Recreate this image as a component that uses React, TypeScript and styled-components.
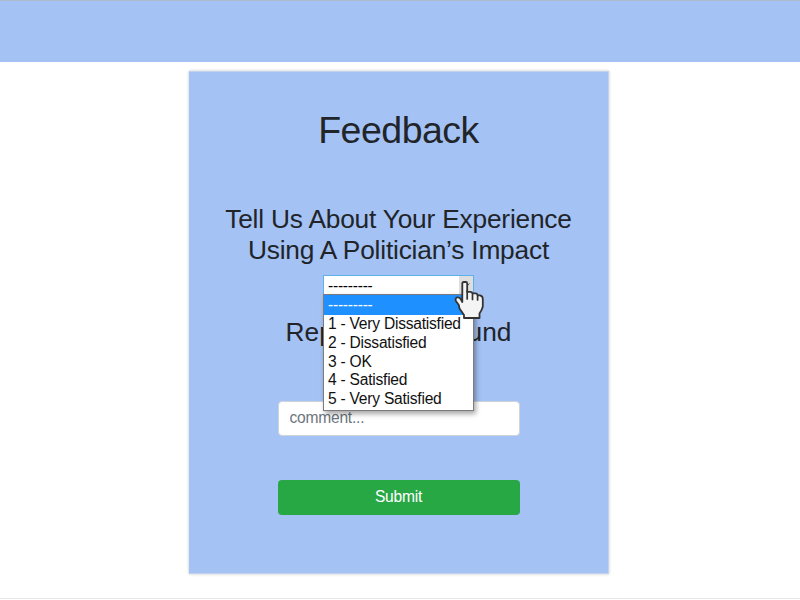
import React from "react";
import styled, { createGlobalStyle } from "styled-components";

const GlobalStyle = createGlobalStyle`
  *, *::before, *::after { box-sizing: border-box; }
  html, body { margin: 0; }
  body {
    height: 600px;
    overflow: hidden;
    background: #fff;
    color: #212529;
    font-family: "Liberation Sans", Arial, sans-serif;
    font-size: 15.6px;
    letter-spacing: -0.24px;
  }
`;

const Page = styled.div`
  display: flex;
  flex-direction: column;
  height: 600px;
`;

const TopBar = styled.header`
  flex: none;
  height: 62px;
  background: #a4c2f4;
  border-top: 1px solid #adbccc;
`;

const Main = styled.main`
  flex: 1;
  padding: 9px 0 0 189px;
`;

const Card = styled.section`
  display: flex;
  flex-direction: column;
  align-items: center;
  width: 420px;
  height: 503px;
  padding: 36px 1px 0 0;
  background: #a4c2f4;
  border: 1px solid #c3d2ee;
  border-left-color: #a4c2f4;
  box-shadow: 0 0 3px rgba(0, 0, 0, 0.22);
`;

const Title = styled.h1`
  margin: 0 0 51px;
  font-size: 37.5px;
  letter-spacing: -0.5px;
  font-weight: 400;
  line-height: 45px;
`;

const Heading = styled.h3<{ $spacing: number }>`
  margin: 0;
  font-size: 26.3px;
  letter-spacing: ${(p) => p.$spacing}px;
  font-weight: 400;
  line-height: 31px;
  text-align: center;
  white-space: nowrap;
`;

const Select = styled.div`
  position: relative;
  display: flex;
  justify-content: space-between;
  width: 151px;
  height: 20px;
  margin: 9px 0 22px;
  border: 1px solid #5eb0ea;
  background: #fff;
  color: #000;
  line-height: 19px;
`;

const SelectValue = styled.span`
  padding-left: 4px;
`;

const SelectArrow = styled.span`
  display: flex;
  align-items: center;
  justify-content: center;
  width: 14px;
  background: #dedede;
`;

const Menu = styled.ul`
  position: absolute;
  z-index: 1;
  top: 18px;
  left: -1px;
  width: 151px;
  height: 117px;
  margin: 0;
  padding: 0;
  list-style: none;
  background: #fff;
  border: 1px solid #7b7b80;
  box-shadow: 2px 3px 5px rgba(0, 0, 0, 0.35);
`;

const Option = styled.li<{ $selected?: boolean }>`
  height: ${(p) => (p.$selected ? 20 : 18.8)}px;
  padding-left: 4px;
  line-height: ${(p) => (p.$selected ? 20 : 17)}px;
  white-space: nowrap;
  color: ${(p) => (p.$selected ? "#fff" : "#111")};
  background: ${(p) => (p.$selected ? "#1e90ff" : "#fff")};
`;

const Pointer = styled.svg`
  position: absolute;
  z-index: 2;
  top: 3px;
  left: 130px;
  width: 32px;
  height: 41px;
`;

const Comment = styled.input`
  width: 242px;
  height: 35px;
  margin: 53px 0 44px;
  padding: 0 11px 2px;
  border: 1px solid #ced4da;
  border-radius: 4px;
  background: #fff;
  color: #495057;
  font: inherit;
  letter-spacing: inherit;
  &::placeholder { color: #6c757d; opacity: 1; }
`;

const Submit = styled.button`
  width: 242px;
  height: 35px;
  padding: 0 0 1px;
  border: 0;
  border-radius: 4px;
  background: #28a745;
  color: #fff;
  font: inherit;
  letter-spacing: inherit;
`;

const Footer = styled.footer`
  flex: none;
  height: 2px;
  border-top: 1px solid #e7e7e7;
`;

const options = [
  "---------",
  "1 - Very Dissatisfied",
  "2 - Dissatisfied",
  "3 - OK",
  "4 - Satisfied",
  "5 - Very Satisfied",
];

function HandPointer() {
  return (
    <Pointer viewBox="0 0 32 41" aria-hidden="true">
      <path
        d="M8.3 23V4.5Q8.3 3 9.8 3H11.7Q13.2 3 13.2 4.5V12.8H16.5Q18.2 12.8 18.5 14.4H21.6Q23.3 14.4 23.6 16.4H26Q28.8 17 28.8 20V27.5Q28 31 25.5 34.5V39H10V36L5.5 29.5L4.8 26L2.2 22.5Q0.8 20 2.5 18.6Q4.8 17.8 6.8 20.2Z"
        fill="#f4f4f4"
        stroke="#333"
        strokeWidth="1.8"
        strokeLinejoin="round"
      />
      <path
        d="M13.2 12V20M18.5 14.5V20.5M23.6 16V21"
        fill="none"
        stroke="#333"
        strokeWidth="1.7"
        strokeLinecap="round"
      />
    </Pointer>
  );
}

export default function App() {
  return (
    <>
      <GlobalStyle />
      <Page>
        <TopBar />
        <Main>
          <Card>
            <Title>Feedback</Title>
            <Heading $spacing={-0.2}>
              Tell Us About Your Experience
              <br />
              Using A Politician’s Impact
            </Heading>
            <Select>
              <SelectValue>{options[0]}</SelectValue>
              <SelectArrow>
                <svg width="7" height="5" viewBox="0 0 7 5">
                  <path d="M0.5 0.5 3.5 3.5 6.5 0.5" fill="none" stroke="#555" />
                </svg>
              </SelectArrow>
              <Menu>
                {options.map((label, i) => (
                  <Option key={label} $selected={i === 0}>
                    {label}
                  </Option>
                ))}
              </Menu>
              <HandPointer />
            </Select>
            <Heading $spacing={0.05}>Reports You Found</Heading>
            <Comment placeholder="comment..." />
            <Submit>Submit</Submit>
          </Card>
        </Main>
        <Footer />
      </Page>
    </>
  );
}
